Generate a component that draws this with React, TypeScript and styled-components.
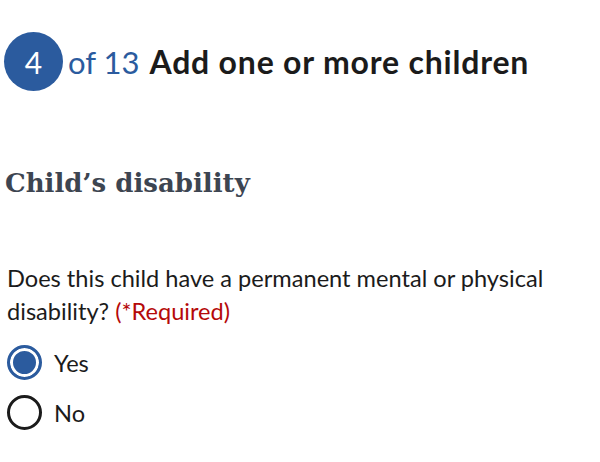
import React from "react";
import styled, { createGlobalStyle } from "styled-components";

const Global = createGlobalStyle`
  html, body { margin: 0; padding: 0; background: #ffffff; }
  body { font-family: Lato, "Open Sans", sans-serif; color: #1b1b1b; }
`;

const Page = styled.main`
  width: 600px;
  height: 462px;
  padding: 32px 0 0 4px;
  box-sizing: border-box;
  overflow: hidden;
`;

const StepHeader = styled.div`
  display: flex;
  align-items: center;
  height: 59px;
`;

const StepBadge = styled.span`
  width: 59px;
  height: 59px;
  border-radius: 50%;
  background: #2b5b9e;
  color: #ffffff;
  display: flex;
  align-items: center;
  justify-content: center;
  font-size: 30px;
  font-family: Lato, sans-serif;
  flex-shrink: 0;
  margin-right: 5px;
`;

const StepCount = styled.span`
  color: #2b5b9e;
  font-size: 31px;
  font-family: Lato, sans-serif;
  margin-right: 10px;
`;

const StepTitle = styled.h1`
  margin: 0;
  font-size: 32px;
  font-weight: 700;
  letter-spacing: 0.8px;
  font-family: Lato, sans-serif;
  color: #1b1b1b;
`;

const SectionHeading = styled.h2`
  margin: 77px 0 0 1px;
  font-family: "DejaVu Serif", serif;
  font-weight: 700;
  font-size: 26px;
  color: #3d4551;
`;

const Fieldset = styled.fieldset`
  border: none;
  margin: 64px 0 0 3px;
  padding: 0;
`;

const Legend = styled.legend`
  padding: 0;
  font-size: 23.6px;
  line-height: 33px;
  color: #1b1b1b;
  width: 570px;
`;

const Required = styled.span`
  color: #b50909;
`;

const Options = styled.div`
  display: flex;
  flex-direction: column;
  gap: 15px;
  margin-top: 17px;
`;

const OptionRow = styled.label`
  display: flex;
  align-items: center;
  gap: 12px;
  font-size: 23.6px;
  height: 35px;
`;

const RadioCircle = styled.span<{ $checked: boolean }>`
  width: 35px;
  height: 35px;
  box-sizing: border-box;
  border-radius: 50%;
  flex-shrink: 0;
  border: ${(p) => (p.$checked ? "3px solid #2b5b9e" : "3px solid #1b1b1b")};
  background: ${(p) => (p.$checked ? "#2b5b9e" : "#ffffff")};
  box-shadow: ${(p) => (p.$checked ? "inset 0 0 0 3px #ffffff" : "none")};
`;

export default function App() {
  return (
    <>
      <Global />
      <Page>
        <StepHeader>
          <StepBadge>4</StepBadge>
          <StepCount>of 13</StepCount>
          <StepTitle>Add one or more children</StepTitle>
        </StepHeader>
        <SectionHeading>Child’s disability</SectionHeading>
        <Fieldset>
          <Legend>
            Does this child have a permanent mental or physical disability?{" "}
            <Required>(*Required)</Required>
          </Legend>
          <Options>
            <OptionRow>
              <RadioCircle $checked={true} />
              Yes
            </OptionRow>
            <OptionRow>
              <RadioCircle $checked={false} />
              No
            </OptionRow>
          </Options>
        </Fieldset>
      </Page>
    </>
  );
}
